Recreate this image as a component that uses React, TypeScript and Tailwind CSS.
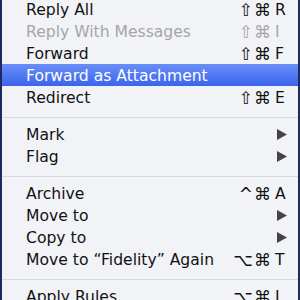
import React from "react";

type Item =
  | { type: "sep" }
  | {
      type: "item";
      label: string;
      mods?: string;
      keyChar?: string;
      sub?: boolean;
      disabled?: boolean;
      active?: boolean;
    };

const items: Item[] = [
  { type: "item", label: "Reply All", mods: "⇧⌘", keyChar: "R" },
  { type: "item", label: "Reply With Messages", mods: "⇧⌘", keyChar: "I", disabled: true },
  { type: "item", label: "Forward", mods: "⇧⌘", keyChar: "F" },
  { type: "item", label: "Forward as Attachment", active: true },
  { type: "item", label: "Redirect", mods: "⇧⌘", keyChar: "E" },
  { type: "sep" },
  { type: "item", label: "Mark", sub: true },
  { type: "item", label: "Flag", sub: true },
  { type: "sep" },
  { type: "item", label: "Archive", mods: "^⌘", keyChar: "A" },
  { type: "item", label: "Move to", sub: true },
  { type: "item", label: "Copy to", sub: true },
  { type: "item", label: "Move to “Fidelity” Again", mods: "⌥⌘", keyChar: "T" },
  { type: "sep" },
  { type: "item", label: "Apply Rules", mods: "⌥⌘", keyChar: "L" },
];

function Arrow({ color }: { color: string }) {
  return (
    <svg width="10" height="11" viewBox="0 0 10 11" className="block">
      <path d="M0 0 L10 5.5 L0 11 Z" fill={color} />
    </svg>
  );
}

export default function App() {
  return (
    <div
      className="w-[300px] h-[300px] overflow-hidden bg-[#1d2c5c]"
      style={{ fontFamily: '"DejaVu Sans", "Liberation Sans", sans-serif' }}
    >
      <div className="ml-[2px] w-[296px] h-[310px] -mt-[2px] bg-[#f1f3f7] text-[15.6px] leading-[22px] text-black">
        {items.map((it, i) => {
          if (it.type === "sep") {
            return (
              <div key={i} className="h-[15px] pt-[9px]">
                <div className="h-px bg-[#d6d9de]" />
              </div>
            );
          }
          const color = it.active ? "text-white" : it.disabled ? "text-[#a6a6a6]" : "text-[#111111]";
          return (
            <div
              key={i}
              className={`flex h-[22px] items-center pl-[24px] ${color} ${
                it.active ? "bg-gradient-to-b from-[#6a8ef8] to-[#3b64ec]" : ""
              }`}
            >
              <span className="flex-1 whitespace-nowrap pt-px">{it.label}</span>
              {it.mods && (
                <span className="flex items-center pt-px">
                  <span className="w-[44px] text-right mr-[3px] text-[17px] tracking-[1px]">{it.mods}</span>
                  <span className="w-[23px]">{it.keyChar}</span>
                </span>
              )}
              {it.sub && (
                <span className="mr-[11px]">
                  <Arrow color={it.active ? "#ffffff" : "#444444"} />
                </span>
              )}
            </div>
          );
        })}
      </div>
    </div>
  );
}
